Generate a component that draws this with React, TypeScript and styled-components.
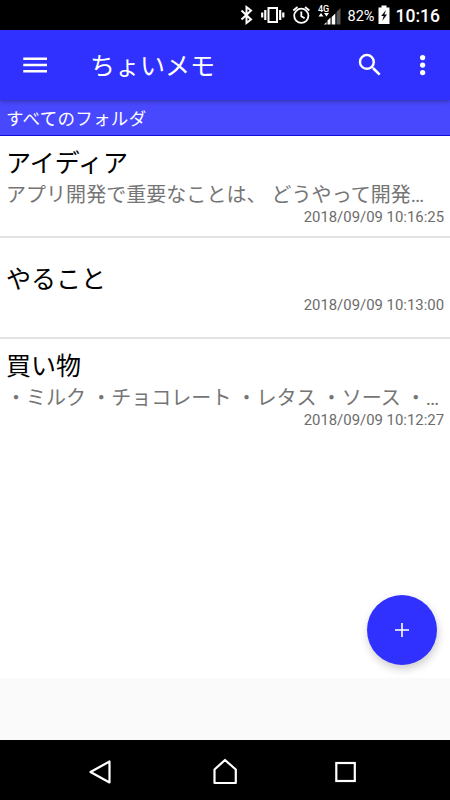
import React from 'react';
import styled, { createGlobalStyle } from 'styled-components';

const GlobalStyle = createGlobalStyle`
  * { box-sizing: border-box; }
  body { margin: 0; background: #fafafa; }
`;

const Screen = styled.div`
  position: relative;
  display: flex;
  flex-direction: column;
  width: 450px;
  height: 800px;
  overflow: hidden;
  background: #fafafa;
  font-family: Roboto, 'Noto Sans CJK JP', sans-serif;
`;

const StatusBar = styled.div`
  flex: none;
  height: 30px;
  background: #000;
  color: #fff;

  svg { display: block; }
`;

const StatusText = styled.text<{ $size: number; $weight?: number }>`
  font-family: Roboto, sans-serif;
  font-size: ${(p) => p.$size}px;
  font-weight: ${(p) => p.$weight ?? 400};
  fill: #fff;
`;

const Toolbar = styled.header`
  position: relative;
  z-index: 1;
  flex: none;
  display: flex;
  align-items: center;
  height: 70px;
  padding: 0 12px 0 20px;
  background: #3030ff;
  box-shadow: 0 1px 5px rgba(0, 0, 0, 0.36);
  color: #fff;
`;

const IconButton = styled.button<{ $gap?: number }>`
  display: flex;
  flex: none;
  padding: 0;
  margin-left: ${(p) => p.$gap ?? 0}px;
  border: 0;
  background: none;
  color: inherit;
`;

const Title = styled.h1`
  flex: 1;
  margin: 3px 0 0 40px;
  font-size: 25px;
  line-height: 36px;
  font-weight: 400;
  white-space: nowrap;
`;

const FolderBar = styled.div`
  flex: none;
  height: 36px;
  padding: 6px 6px 0;
  background: #4848ff;
  border-bottom: 1px solid #1010dc;
  color: #fff;
  font-size: 17.5px;
  line-height: 26px;
  letter-spacing: 0.3px;
`;

const MemoList = styled.main`
  flex: none;
  height: 542px;
  background: #fff;
`;

const Memo = styled.article`
  display: flex;
  flex-direction: column;
  justify-content: center;
  height: 100px;
  padding: 0 6px;

  & + & {
    height: 101px;
    padding-top: 2px;
    border-top: 2px solid #e3e3e3;
  }
`;

const MemoTitle = styled.h2`
  margin: 0;
  font-size: 25px;
  line-height: 34px;
  font-weight: 400;
  color: #000;
`;

const Excerpt = styled.p`
  margin: 0;
  overflow: hidden;
  font-size: 20px;
  line-height: 28px;
  letter-spacing: 0.04px;
  color: #757575;
  white-space: pre;
`;

const Stamp = styled.time`
  align-self: flex-end;
  font-size: 14.9px;
  line-height: 17px;
  color: #6c6c6c;
`;

const Fab = styled.button`
  position: absolute;
  right: 13px;
  top: 595px;
  display: flex;
  align-items: center;
  justify-content: center;
  width: 70px;
  height: 70px;
  padding: 0;
  border: 0;
  border-radius: 50%;
  background: #3030ff;
  box-shadow: 1px 4px 9px rgba(0, 0, 0, 0.2);
`;

const NavBar = styled.nav`
  flex: none;
  height: 60px;
  margin-top: auto;
  background: #000;

  svg { display: block; }
`;

const memos = [
  { title: 'アイディア', excerpt: 'アプリ開発で重要なことは、 どうやって開発…', time: '2018/09/09 10:16:25' },
  { title: 'やること', excerpt: '', time: '2018/09/09 10:13:00' },
  { title: '買い物', excerpt: '・ミルク ・チョコレート ・レタス ・ソース ・…', time: '2018/09/09 10:12:27' },
];

function StatusIcons() {
  return (
    <svg width="450" height="30" viewBox="0 0 450 30" fill="none" stroke="#fff">
      <path d="M241.5 10.5 251 19.5 246.5 23V7L251 10.5 241.5 19.5" strokeWidth="2" />
      <rect x="268.5" y="8" width="8.5" height="14" strokeWidth="2" />
      <path d="M265.3 10v10M262.2 12.5v5M280.2 10v10M283.3 12.5v5" strokeWidth="2.2" />
      <circle cx="301.3" cy="15.8" r="7.1" strokeWidth="1.8" />
      <path d="M293.3 10.5 297.5 7M309.3 10.5 305.1 7M301.3 11.5v4.8l3.3 2" strokeWidth="1.8" />
      <StatusText $size={9} $weight={500} stroke="none" x="318" y="11.5">4G</StatusText>
      <path d="M318.5 16.5 321 13l2.5 3.5zM324 13h5l-2.5 3.5z" fill="#fff" stroke="none" />
      <path d="M324 24.5h2.5V22zM327.5 24.5h3v-7l-3 3zM331.7 24.5h3.6V13.5l-3.6 3.5z" fill="#fff" stroke="none" />
      <path d="M336.5 24.5h4V8l-4 4z" fill="#555" stroke="none" />
      <StatusText $size={15} stroke="none" x="347.5" y="21" textLength="27" lengthAdjust="spacingAndGlyphs">82%</StatusText>
      <path d="M378.5 7.5h3V5.5h5v2h3V24h-11z" fill="#fff" stroke="none" />
      <path d="M386 10 381.2 16h2.5l-1.5 5 4.8-6.5h-2.6z" fill="#000" stroke="none" />
      <StatusText $size={18.5} $weight={500} stroke="none" x="395.5" y="22" textLength="44.5" lengthAdjust="spacingAndGlyphs">10:16</StatusText>
    </svg>
  );
}

export default function App() {
  return (
    <>
      <GlobalStyle />
      <Screen>
        <StatusBar><StatusIcons /></StatusBar>
        <Toolbar>
          <IconButton aria-label="メニュー">
            <svg width="30" height="30" viewBox="0 0 24 24" fill="currentColor">
              <path d="M2.6 18h19v-2h-19v2zm0-5h19v-2h-19v2zm0-7v2h19V6h-19z" />
            </svg>
          </IconButton>
          <Title>ちょいメモ</Title>
          <IconButton aria-label="検索">
            <svg width="30" height="30" viewBox="0 0 24 24" fill="currentColor">
              <path d="M15.5 14h-.79l-.28-.27A6.471 6.471 0 0 0 16 9.5 6.5 6.5 0 1 0 9.5 16c1.61 0 3.09-.59 4.23-1.57l.27.28v.79l5 4.99L20.49 19l-4.99-5zm-6 0C7.01 14 5 11.99 5 9.5S7.01 5 9.5 5 14 7.01 14 9.5 11.99 14 9.5 14z" />
            </svg>
          </IconButton>
          <IconButton aria-label="その他" $gap={23}>
            <svg width="30" height="30" viewBox="0 0 24 24" fill="currentColor">
              <circle cx="11.7" cy="6" r="2.1" />
              <circle cx="11.7" cy="12" r="2.1" />
              <circle cx="11.7" cy="18" r="2.1" />
            </svg>
          </IconButton>
        </Toolbar>
        <FolderBar>すべてのフォルダ</FolderBar>
        <MemoList>
          {memos.map((memo) => (
            <Memo key={memo.time}>
              <MemoTitle>{memo.title}</MemoTitle>
              {memo.excerpt && <Excerpt>{memo.excerpt}</Excerpt>}
              <Stamp>{memo.time}</Stamp>
            </Memo>
          ))}
        </MemoList>
        <Fab aria-label="追加">
          <svg width="16" height="16" viewBox="0 0 16 16" stroke="#fff" strokeWidth="1.6">
            <path d="M8 1v14M1 8h14" />
          </svg>
        </Fab>
        <NavBar>
          <svg width="450" height="60" viewBox="0 0 450 60" fill="none" stroke="#fff" strokeWidth="2.2" strokeLinejoin="round">
            <path d="M90.5 32 109.5 21.5V42.5z" />
            <path d="M214.5 43V29.5L225 20l10.8 9.5V43z" />
            <rect x="336.3" y="23" width="18.5" height="18" strokeLinejoin="miter" />
          </svg>
        </NavBar>
      </Screen>
    </>
  );
}
